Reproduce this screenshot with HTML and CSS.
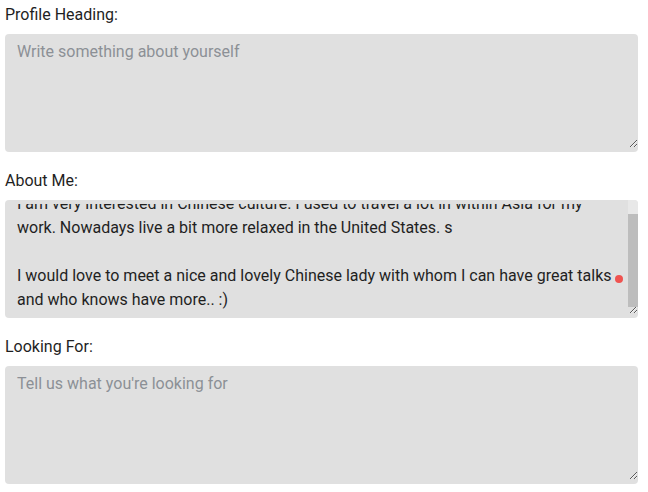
FILE: index.html
```html
<!DOCTYPE html>
<html lang="en">
<head>
<meta charset="utf-8">
<title>Profile</title>
<link rel="stylesheet" href="styles.css">
</head>
<body>
<form class="profile-form">
  <div class="field">
    <label class="field-label" for="heading">Profile Heading:</label>
    <textarea class="field-input" id="heading" placeholder="Write something about yourself"></textarea>
  </div>
  <div class="field">
    <label class="field-label" for="about">About Me:</label>
    <div class="input-wrap">
      <textarea class="field-input field-input-scroll" id="about">I am very interested in Chinese culture. I used to travel a lot in within Asia for my
work. Nowadays live a bit more relaxed in the United States. s

I would love to meet a nice and lovely Chinese lady with whom I can have great talks
and who knows have more.. :)</textarea>
      <div class="scroll-track"><div class="scroll-thumb"></div></div>
      <span class="status-dot"></span>
    </div>
  </div>
  <div class="field">
    <label class="field-label" for="looking">Looking For:</label>
    <textarea class="field-input" id="looking" placeholder="Tell us what you're looking for"></textarea>
  </div>
</form>
<script src="script.js"></script>
</body>
</html>
```
FILE: styles.css
```css
html, body {
  margin: 0;
  padding: 0;
  background: #ffffff;
}

body {
  font-family: Roboto, "Liberation Sans", sans-serif;
  font-size: 16px;
  line-height: 24px;
  color: #1f1f1f;
}

.profile-form {
  padding: 3px 10px 0 5px;
}

.field {
  margin-bottom: 17px;
}

.field-label {
  display: block;
  margin-bottom: 7px;
  color: #1f1f1f;
}

.input-wrap {
  position: relative;
}

.field-input {
  display: block;
  box-sizing: border-box;
  width: 633px;
  height: 118px;
  margin: 0;
  padding: 2px 12px;
  border-style: solid;
  border-color: transparent;
  border-width: 4px 0;
  border-radius: 4px;
  background: #e0e0e0;
  font-family: Roboto, "Liberation Sans", sans-serif;
  font-size: 16px;
  line-height: 24px;
  color: #1f1f1f;
  outline: none;
  resize: vertical;
}

.field-input-scroll {
  padding-right: 22px;
  white-space: pre-wrap;
}

.field-input::placeholder {
  color: #8c9096;
  opacity: 1;
}

.scroll-track {
  position: absolute;
  right: 0;
  top: 0;
  width: 10px;
  height: 107px;
  display: flex;
  flex-direction: column;
  background: #e8e8e8;
  border-top-right-radius: 4px;
}

.scroll-thumb {
  margin-top: 14px;
  flex: 1;
  background: #bdbdbd;
}

.status-dot {
  position: absolute;
  left: 610px;
  top: 75px;
  width: 8px;
  height: 8px;
  border-radius: 50%;
  background: #ef5350;
}
```
FILE: script.js
```js
var about = document.getElementById('about');
about.scrollTop = about.scrollHeight;
```
